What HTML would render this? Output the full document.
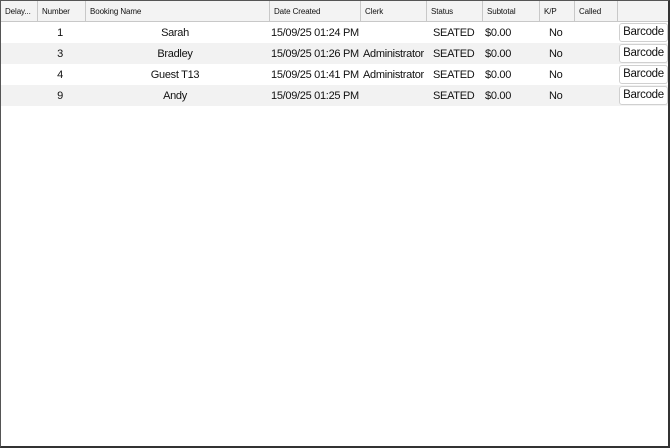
<!DOCTYPE html>
<html><head><style>
*{margin:0;padding:0;box-sizing:border-box}
body{width:670px;height:448px;background:#fff;font-family:"Liberation Sans",Arial,sans-serif;overflow:hidden}
.frame{position:absolute;left:0;top:0;width:670px;height:448px;border:1px solid #555;border-right:2px solid #333;border-bottom:2px solid #333}
.hdr{position:absolute;left:1px;top:1px;width:667px;height:21px;background:#f3f3f3;border-bottom:1px solid #c8c8c8}
.h{position:absolute;top:0;height:21px;line-height:21px;font-size:8px;letter-spacing:-0.1px;color:#111;padding-left:4px;border-right:1px solid #c8c8c8;white-space:nowrap;overflow:hidden}
.row{position:absolute;left:1px;width:667px;height:21px}
.c{position:absolute;top:1px;height:21px;line-height:21px;font-size:11px;letter-spacing:-0.3px;color:#111;white-space:nowrap}
.ctr{text-align:center}
.btn{position:absolute;left:618px;top:1px;width:49px;height:19px;border:1px solid #d0d0d0;border-radius:3px;background:#fff;font-size:11.5px;letter-spacing:-0.3px;line-height:17px;text-align:center;color:#111}
</style></head><body>
<div class="hdr">
<div class="h" style="left:0;width:37px">Delay...</div>
<div class="h" style="left:37px;width:48px">Number</div>
<div class="h" style="left:85px;width:184px">Booking Name</div>
<div class="h" style="left:269px;width:91px">Date Created</div>
<div class="h" style="left:360px;width:66px">Clerk</div>
<div class="h" style="left:426px;width:56px">Status</div>
<div class="h" style="left:482px;width:57px">Subtotal</div>
<div class="h" style="left:539px;width:35px">K/P</div>
<div class="h" style="left:574px;width:43px">Called</div>
<div class="h" style="left:617px;width:50px;border-right:none"></div>
</div>

<div class="row" style="top:22px;background:#fff">
<div class="c ctr" style="left:36px;width:46px">1</div><div class="c ctr" style="left:84px;width:180px">Sarah</div>
<div class="c" style="left:270px">15/09/25 01:24 PM</div>
<div class="c" style="left:432px">SEATED</div><div class="c" style="left:484px">$0.00</div><div class="c" style="left:548px">No</div>
<div class="btn">Barcode</div></div>

<div class="row" style="top:43px;background:#f2f2f2">
<div class="c ctr" style="left:36px;width:46px">3</div><div class="c ctr" style="left:84px;width:180px">Bradley</div>
<div class="c" style="left:270px">15/09/25 01:26 PM</div><div class="c" style="left:362px">Administrator</div>
<div class="c" style="left:432px">SEATED</div><div class="c" style="left:484px">$0.00</div><div class="c" style="left:548px">No</div>
<div class="btn">Barcode</div></div>

<div class="row" style="top:64px;background:#fff">
<div class="c ctr" style="left:36px;width:46px">4</div><div class="c ctr" style="left:84px;width:180px">Guest T13</div>
<div class="c" style="left:270px">15/09/25 01:41 PM</div><div class="c" style="left:362px">Administrator</div>
<div class="c" style="left:432px">SEATED</div><div class="c" style="left:484px">$0.00</div><div class="c" style="left:548px">No</div>
<div class="btn">Barcode</div></div>

<div class="row" style="top:85px;background:#f2f2f2">
<div class="c ctr" style="left:36px;width:46px">9</div><div class="c ctr" style="left:84px;width:180px">Andy</div>
<div class="c" style="left:270px">15/09/25 01:25 PM</div>
<div class="c" style="left:432px">SEATED</div><div class="c" style="left:484px">$0.00</div><div class="c" style="left:548px">No</div>
<div class="btn">Barcode</div></div>

<div class="frame"></div>
</body></html>
